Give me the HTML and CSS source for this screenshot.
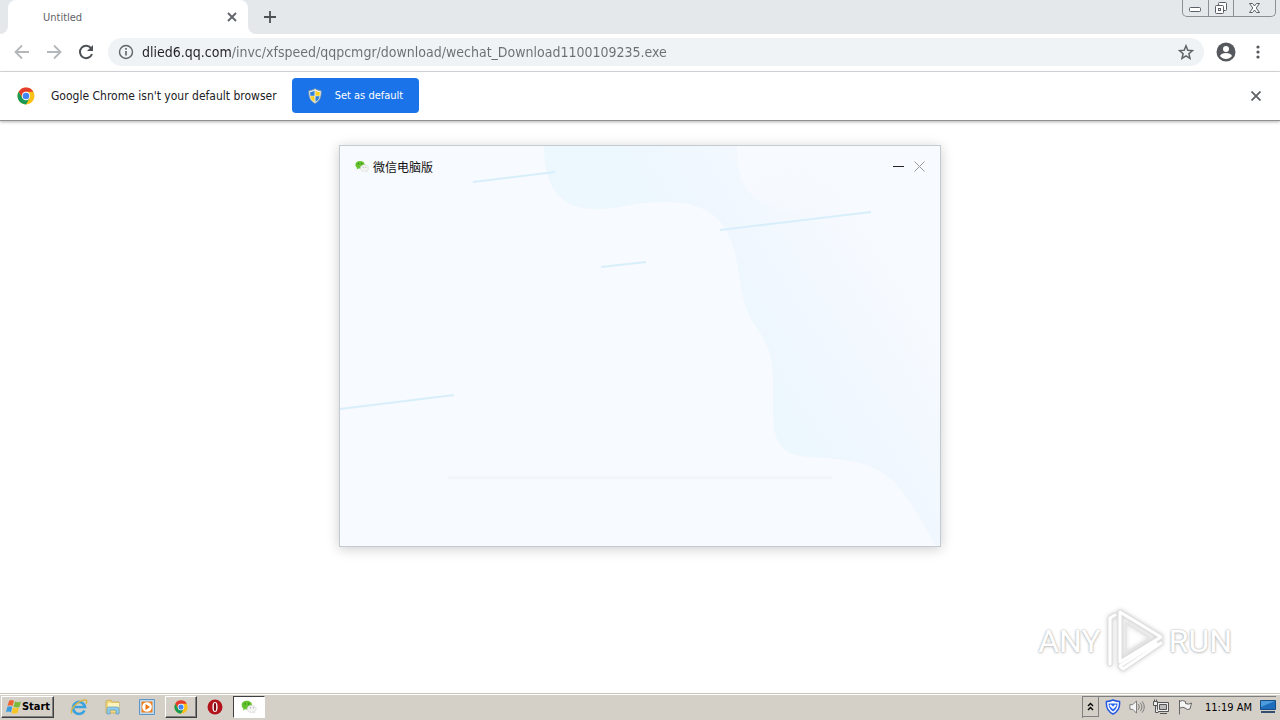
FILE: index.html
```html
<!DOCTYPE html>
<html lang="en">
<head>
<meta charset="UTF-8">
<meta name="viewport" content="width=device-width, initial-scale=1">
<title>Untitled</title>
<link rel="stylesheet" href="styles.css">
</head>
<body>

<header class="tabstrip">
  <div class="tab-edge"></div>
  <div class="tab">
    <span>Untitled</span>
    <button class="icon-btn" aria-label="Close tab">
      <svg width="10" height="10" viewBox="0 0 10 10"><path d="M1 1l8 8M9 1L1 9" stroke="#5f6368" stroke-width="1.800"/></svg>
    </button>
  </div>
  <div class="tab-rest">
    <button class="icon-btn" aria-label="New tab">
      <svg width="12" height="12" viewBox="0 0 12 12"><path d="M6 0v12M0 6h12" stroke="#4d5156" stroke-width="1.800"/></svg>
    </button>
    <div class="win-controls">
      <button aria-label="Minimize"><svg width="13" height="6" viewBox="0 0 13 6"><rect x=".5" y=".5" width="11" height="4" rx="1" fill="#fff" stroke="#5a6068"/></svg></button>
      <button aria-label="Restore"><svg width="14" height="14" viewBox="0 0 14 14" fill="#fff" stroke="#5a6068"><rect x="4.500" y="1.500" width="8" height="8" rx="1"/><rect x="1.500" y="4.500" width="8" height="8" rx="1"/><rect x="4.500" y="7.500" width="2" height="2"/></svg></button>
      <button class="wide" aria-label="Close"><svg width="13" height="12" viewBox="0 0 13 12"><path d="M1.500 1.500h3l2 2.500 2-2.500h3L8.200 6l3.300 4.500h-3l-2-2.500-2 2.500h-3L4.800 6z" fill="#fff" stroke="#5a6068"/></svg></button>
    </div>
  </div>
</header>

<nav class="toolbar">
  <button class="icon-btn" aria-label="Back"><svg width="16" height="16" viewBox="0 0 16 16" fill="none" stroke="#b4b7ba" stroke-width="1.800"><path d="M15 8H2M8 1.500L1.500 8 8 14.500"/></svg></button>
  <button class="icon-btn" aria-label="Forward"><svg width="16" height="16" viewBox="0 0 16 16" fill="none" stroke="#b4b7ba" stroke-width="1.800"><path d="M1 8h13M8 1.500L14.500 8 8 14.500"/></svg></button>
  <button class="icon-btn" aria-label="Reload"><svg width="16" height="16" viewBox="0 0 16 16"><path d="M13.300 4.500A6.200 6.200 0 1 0 14 10" fill="none" stroke="#4d5156" stroke-width="2"/><path d="M15 1v6H9z" fill="#4d5156"/></svg></button>
  <div class="omnibox">
    <svg width="16" height="16" viewBox="0 0 16 16"><circle cx="8" cy="8" r="6.500" fill="none" stroke="#5f6368" stroke-width="1.400"/><path d="M8 7v4.500M8 4v1.800" stroke="#5f6368" stroke-width="1.600"/></svg>
    <input type="text" aria-label="Address" value="dlied6.qq.com/invc/xfspeed/qqpcmgr/download/wechat_Download1100109235.exe">
    <button class="icon-btn" aria-label="Bookmark"><svg width="16" height="16" viewBox="0 0 16 16"><path d="M8 1.800l1.800 4.400 4.700.4-3.600 3.100 1.100 4.600L8 11.800l-4 2.500 1.100-4.600L1.500 6.600l4.700-.4z" fill="none" stroke="#5f6368" stroke-width="1.500"/></svg></button>
  </div>
  <button class="icon-btn profile" aria-label="Profile"><svg width="20" height="20" viewBox="0 0 20 20"><circle cx="10" cy="10" r="9.500" fill="#55585d"/><circle cx="10" cy="7" r="3" fill="#fff"/><path d="M4 14c1-4 11-4 12 0-3 4-9 4-12 0z" fill="#fff"/></svg></button>
  <button class="icon-btn" aria-label="Menu"><svg width="4" height="14" viewBox="0 0 4 14" fill="#55585d"><circle cx="2" cy="2" r="1.600"/><circle cx="2" cy="7" r="1.600"/><circle cx="2" cy="12" r="1.600"/></svg></button>
</nav>

<section class="infobar">
  <svg width="18" height="18" viewBox="0 0 18 18"><use href="#chrome"/></svg>
  <p>Google Chrome isn't your default browser</p>
  <button class="set-default">
    <svg width="14" height="16" viewBox="0 0 14 16"><path d="M7 .5C5 2 3 2.500.800 2.500.500 9 2 13 7 15.500 12 13 13.500 9 13.200 2.500 11 2.500 9 2 7 .5z" fill="#e8edf2" stroke="#6e88a0" stroke-width=".8"/><path d="M6.500 2.500C5 3.500 3.500 4 2.200 4l.1 3.700h4.200z" fill="#2f80d8"/><path d="M7.500 2.500C9 3.500 10.500 4 11.800 4l-.1 3.700H7.500z" fill="#fbd21f"/><path d="M2.400 8.300h4.100v5.500C4 12.500 2.800 10.800 2.400 8.300z" fill="#fbd21f"/><path d="M11.600 8.300H7.500v5.500c2.500-1.300 3.700-3 4.100-5.500z" fill="#2f80d8"/></svg>
    Set as default
  </button>
  <button class="icon-btn" aria-label="Dismiss"><svg width="10" height="10" viewBox="0 0 10 10"><path d="M.500.500l9 9M9.500.500l-9 9" stroke="#5f6368" stroke-width="1.800"/></svg></button>
</section>

<main>
  <section class="installer">
    <svg class="art" viewBox="0 0 600 400" preserveAspectRatio="none">
      <defs>
        <linearGradient id="wave" gradientUnits="userSpaceOnUse" x1="410" y1="210" x2="550" y2="120">
          <stop offset="0" stop-color="#edf7fe"/>
          <stop offset=".6" stop-color="#f2f8fe"/>
          <stop offset="1" stop-color="#f7faff"/>
        </linearGradient>
        <linearGradient id="fade" gradientUnits="userSpaceOnUse" x1="450" y1="10" x2="490" y2="85">
          <stop offset="0" stop-color="#f7faff"/>
          <stop offset="1" stop-color="#f7faff" stop-opacity="0"/>
        </linearGradient>
      </defs>
      <path d="M204 0C204 38 218 63 255 63C285 63 290 56 325 56C382 56 393 86 400 135C407 190 431 180 433 230C435 275 424 309 470 311C550 315 555 329 596 400H600V0z" fill="url(#wave)"/>
      <path d="M397 0H600V175C560 120 525 85 450 66C410 58 397 40 397 0z" fill="url(#fade)"/>
      <path d="M133 36l82-10M380 84l151-18M261 121l45-5M0 263l114-14" stroke="#d8effb" stroke-width="2"/>
    </svg>
    <div class="installer-title">
      <svg width="14" height="12" viewBox="0 0 18 15"><use href="#wechat"/></svg>
      <h1>微信电脑版</h1>
      <button class="icon-btn" aria-label="Minimize"><svg width="11" height="11" viewBox="0 0 11 11"><path d="M0 5.500h11" stroke="#222" stroke-width="1"/></svg></button>
      <button class="icon-btn" aria-label="Close"><svg width="11" height="11" viewBox="0 0 11 11"><path d="M.500.500l10 10M10.500.500l-10 10" stroke="#999"/></svg></button>
    </div>
    <div class="progress"></div>
  </section>

  <div class="watermark">
    <span>ANY</span>
    <svg width="58" height="64" viewBox="0 0 58 64" fill="none" stroke-linejoin="round" stroke-linecap="round">
      <g stroke="#dedede" stroke-width="5"><path d="M14 3L55 28 14 53zM4 55V9l5-3M55 34L17 60l-3-3 36-23"/></g>
      <g stroke="#fff" stroke-width="3"><path d="M14 3L55 28 14 53zM4 55V9l5-3M55 34L17 60l-3-3 36-23"/></g>
      <path d="M20 14v30l24-15z" stroke="#e4e4e4" stroke-width="1.500"/>
    </svg>
    <span>RUN</span>
  </div>
</main>

<footer class="taskbar">
  <button class="task raised start">
    <svg width="17" height="16" viewBox="0 0 17 16"><path d="M4 2q3-2 5 0L7.500 7q-2-1.500-5 0z" fill="#ee6332"/><path d="M10 2.500q3 1.500 6 0L14.500 8q-3 1-6-.5z" fill="#7cba3d"/><path d="M2.200 8q3-1.500 5 0L6 13.500q-3-2-5 0z" fill="#3a9de0"/><path d="M8 8.500q3 1.500 6 0L12.500 14q-3 1.500-6 0z" fill="#fbc527"/></svg>
    Start
  </button>
  <button class="task" aria-label="Internet Explorer"><svg width="18" height="18" viewBox="0 0 18 18" fill="none"><path d="M14.500 12.500A6 6 0 1 1 15 9H4" stroke="#3aa3df" stroke-width="2.600"/><path d="M2 15.500C-1 12 8 2 15.500 2 17.500 2 17 4 16 6" stroke="#d9b544" stroke-width="1.300"/></svg></button>
  <button class="task" aria-label="Explorer"><svg width="18" height="18" viewBox="0 0 18 18"><path d="M2 3l5-1 1 2h7v11H2z" fill="#f2d77c" stroke="#c9a94f" stroke-width=".8"/><path d="M4 5h11v5H4z" fill="#fff3bd"/><path d="M3 16V11q0-2 2-2h8q2 0 2 2v5h-3v-4H6v4z" fill="#8fcbea" stroke="#5b9cc2" stroke-width=".7"/></svg></button>
  <button class="task" aria-label="Media Player"><svg width="18" height="18" viewBox="0 0 18 18"><path d="M1.500 1.500h15v15h-15z" fill="#bddcf3" stroke="#5c96c8"/><path d="M3.500 3.500h11v11h-11z" fill="#f2811d"/><circle cx="9" cy="9" r="4.800" fill="#fff"/><path d="M7.500 6v6L12 9z" fill="#ee7410"/></svg></button>
  <button class="task raised" aria-label="Chrome"><svg width="14" height="14" viewBox="0 0 18 18"><use href="#chrome"/></svg></button>
  <button class="task" aria-label="Opera"><svg width="16" height="16" viewBox="0 0 16 16"><circle cx="8" cy="8" r="7.500" fill="#b3141c"/><ellipse cx="8" cy="8" rx="2.600" ry="5" fill="#fff"/><ellipse cx="8" cy="8" rx="1.200" ry="4.200" fill="#7c0c12"/></svg></button>
  <button class="task pressed" aria-label="WeChat"><svg width="16" height="13" viewBox="0 0 18 15"><use href="#wechat"/></svg></button>
  <div class="tray">
    <button class="task chevron" aria-label="Show hidden icons"><svg width="7" height="9" viewBox="0 0 7 9" fill="none" stroke="#000" stroke-width="1.400"><path d="M1 4l2.500-2.500L6 4M1 8l2.500-2.500L6 8"/></svg></button>
    <svg width="16" height="16" viewBox="0 0 16 16"><path d="M8 1q3.500 1.500 6.500 1.500 1 9-6.500 12.500Q.500 11.500 1.500 2.500 4.500 2.500 8 1z" fill="#fff" stroke="#2458dc" stroke-width="1.500"/><path d="M3.500 4.500h9q0 5-4.500 8-4.500-3-4.500-8z" fill="#2a66ee"/><path d="M5 6l3 3 3-3" fill="none" stroke="#fff" stroke-width="1.800"/></svg>
    <svg width="16" height="16" viewBox="0 0 17 16" fill="none" stroke="#777"><path d="M1 5.500h3l4-4v13l-4-4H1z" fill="#f5f5f5"/><path d="M10 5q2 3 0 6M12 3.500q3.500 4.500 0 9M14 2q4.500 6 0 12"/></svg>
    <svg width="16" height="16" viewBox="0 0 16 16" fill="#eee" stroke="#555"><path d="M4.500 3.500h11v9h-11z"/><path d="M6.500 5.500h7v5h-7z" fill="#bbb"/><path d="M7 14.500h7M.500 2.500h4v4h-4zM1.500.500v2M3.500.500v2M2.500 6.500v7h3"/></svg>
    <svg width="16" height="16" viewBox="0 0 16 16" fill="#f5f5f5" stroke="#666"><path d="M2.500 2.500q3-2 6 0v2q3 1.500 6-.5l-1.500 6q-3 1.500-5-1-2-1.500-5 0M2.500 1v14.500"/></svg>
    <time>11:19 AM</time>
    <svg width="16" height="14" viewBox="0 0 16 14"><path d="M.500.500h15v9H.500z" fill="#1f6dba" stroke="#174d87"/><path d="M1 1h14L1 7z" fill="#4c9cdd"/><path d="M1 11h14v2H1z" fill="#344e6e"/></svg>
  </div>
</footer>

<!-- shared icons -->
<svg class="sprite" width="0" height="0">
  <symbol id="chrome" viewBox="0 0 18 18">
    <circle cx="9" cy="9" r="8.500" fill="#fbc116"/>
    <path d="M1.640 4.750A8.500 8.500 0 0 1 16.400 4.750H9A4.250 4.250 0 0 0 5.300 11z" fill="#e33b2e"/>
    <path d="M1.640 4.750A8.500 8.500 0 0 0 9 17.500L12.700 11.100A4.250 4.250 0 0 1 5.300 11.100z" fill="#169a55"/>
    <circle cx="9" cy="9" r="4.200" fill="#fff"/>
    <circle cx="9" cy="9" r="3.300" fill="#4285f4"/>
  </symbol>
  <symbol id="wechat" viewBox="0 0 18 15">
    <path d="M6.500 1C3 1 .5 3 .5 6c0 1.600.8 3 2.200 3.900L2 12l2.500-1.300C10 11.500 12.500 9 12.500 6c0-3-2.500-5-6-5z" fill="#63c22d"/>
    <path d="M12 6c-3 0-5.200 1.800-5.200 4.200s2.200 4.200 5.200 4.200l2-.3 1.800.9-.5-1.700c1.200-.8 2-1.900 2-3.100C17.300 7.800 15 6 12 6z" fill="#f4f4f4" stroke="#c9cdc9" stroke-width=".6"/>
    <circle cx="4.500" cy="4.500" r=".8" fill="#267810"/><circle cx="8.500" cy="4.500" r=".8" fill="#267810"/>
    <circle cx="10.500" cy="9" r=".6" fill="#777"/><circle cx="14" cy="9" r=".6" fill="#777"/>
  </symbol>
</svg>

</body>
</html>
```
FILE: styles.css
```css
* {
  box-sizing: border-box;
}
body {
  margin: 0;
  min-height: 100vh;
  display: flex;
  flex-direction: column;
  background: #fff;
  color: #202124;
  font-family: "DejaVu Sans Condensed", "DejaVu Sans", "Noto Sans CJK SC", sans-serif;
  font-size: 12px;
}
button {
  font: inherit;
  color: inherit;
  padding: 0;
  border: none;
  background: none;
}
svg {
  display: block;
  flex: none;
}
.sprite {
  position: absolute;
}
.icon-btn {
  display: flex;
  align-items: center;
  justify-content: center;
}

/* tabs */
.tabstrip {
  display: flex;
  height: 34px;
  background: #fff;
}
.tab-edge {
  width: 8px;
  background: #e4e8eb;
  border-bottom-right-radius: 8px;
}
.tab {
  width: 240px;
  padding: 0 11px 0 35px;
  display: flex;
  align-items: center;
  justify-content: space-between;
  background: linear-gradient(#e4e8eb, #e4e8eb) top / 100% 8px no-repeat;
  position: relative;
  font-size: 11px;
  color: #5f6368;
}
.tab::before {
  content: "";
  position: absolute;
  inset: 0;
  background: #fff;
  border-radius: 8px 8px 0 0;
}
.tab > * {
  position: relative;
}
.tab-rest {
  flex: 1;
  display: flex;
  align-items: flex-start;
  justify-content: space-between;
  padding: 0 4px 0 16px;
  background: #e4e8eb;
  border-bottom-left-radius: 8px;
}
.tab-rest > .icon-btn {
  height: 34px;
}
.win-controls {
  display: flex;
  border: 1px solid #8a9096;
  border-top: none;
  border-radius: 0 0 5px 5px;
}
.win-controls button {
  width: 25px;
  height: 16px;
  display: flex;
  align-items: center;
  justify-content: center;
}
.win-controls button:first-child svg {
  margin-top: 4px;
}
.win-controls button + button {
  border-left: 1px solid #8a9096;
}
.win-controls .wide {
  width: 42px;
}

/* address row */
.toolbar {
  display: flex;
  align-items: center;
  gap: 16px;
  height: 38px;
  padding: 0 20px 2px 14px;
  border-bottom: 1px solid #dadce0;
}
.omnibox {
  flex: 1;
  height: 28px;
  margin: 0 -4px 0 -2px;
  padding: 0 10px;
  display: flex;
  align-items: center;
  gap: 8px;
  background: #eff3f5;
  border-radius: 14px;
}
.profile {
  margin-right: 4px;
}
.omnibox input {
  flex: 1;
  min-width: 0;
  padding: 0;
  border: none;
  outline: none;
  font: inherit;
  font-size: 14px;
  line-height: 20px;
  /* host dark, path grey */
  color: transparent;
  background: linear-gradient(90deg, #202124 89px, #6a6e73 89px);
  -webkit-background-clip: text;
  background-clip: text;
}

/* default browser bar */
.infobar {
  display: flex;
  align-items: center;
  height: 49px;
  padding: 0 19px 1px 17px;
  border-bottom: 1px solid #8f9294;
  box-shadow: 0 1px 3px rgba(0, 0, 0, 0.3);
}
.infobar p {
  margin: 0 15px 0 16px;
  font-size: 12px;
}
.set-default {
  display: flex;
  align-items: center;
  gap: 13px;
  height: 35px;
  padding: 0 16px;
  border-radius: 4px;
  background: #1a73e8;
  color: #fff;
  font-size: 11px;
}
.infobar > .icon-btn {
  margin-left: auto;
}

main {
  flex: 1;
  position: relative;
  padding: 24px 16px;
}

/* installer window */
.installer {
  position: relative;
  width: 100%;
  max-width: 602px;
  min-height: 402px;
  margin: 0 auto;
  display: flex;
  flex-direction: column;
  justify-content: space-between;
  align-items: center;
  border: 1px solid #c3cad0;
  background: #f7faff;
  box-shadow: 0 2px 12px rgba(0, 0, 0, 0.2);
}
.art {
  position: absolute;
  inset: 0;
  width: 100%;
  height: 100%;
}
.installer-title {
  position: relative;
  align-self: stretch;
  display: flex;
  align-items: center;
  gap: 10px;
  height: 40px;
  padding: 0 15px;
}
.installer-title h1 {
  flex: 1;
  margin: 0 0 0 -6px;
  font-family: "Noto Sans CJK SC", sans-serif;
  font-size: 12px;
  font-weight: normal;
  color: #111;
}
.progress {
  position: relative;
  width: 64%;
  height: 3px;
  margin-bottom: 67px;
  background: #f2f6fa;
}

.watermark {
  position: absolute;
  right: 48px;
  bottom: 20px;
  display: flex;
  align-items: center;
  gap: 5px;
  font-family: Roboto, "Liberation Sans", sans-serif;
  font-size: 32px;
  color: #fff;
  text-shadow: 0 0 2px #aaa, 0 1px 3px #ccc;
}
.watermark svg {
  filter: drop-shadow(0 0 2px #ccc);
}

/* taskbar */
.taskbar {
  display: flex;
  align-items: center;
  gap: 2px;
  height: 27px;
  padding: 1px 4px 2px 1px;
  border-top: 1px solid #c8c4bc;
  box-shadow: inset 0 1px #fff;
  background: #d4d0c8;
  font-size: 11px;
  color: #000;
}
.task {
  width: 32px;
  height: 22px;
  display: flex;
  align-items: center;
  justify-content: center;
}
.raised {
  border: 1px solid;
  border-color: #fff #404040 #404040 #fff;
  box-shadow: inset -1px -1px #808080;
}
.pressed {
  border: 1px solid;
  border-color: #404040 #fff #fff #404040;
  background: #fff;
}
.start {
  width: 53px;
  margin-right: 7px;
  font-weight: bold;
}
.tray {
  display: flex;
  align-items: center;
  gap: 8px;
  height: 22px;
  margin-left: auto;
  border-top: 1px solid #808080;
  border-left: 1px solid #808080;
}
.tray time {
  margin-left: 4px;
}
.chevron {
  width: 16px;
  height: 20px;
  margin-right: -2px;
  border-right: 1px solid #808080;
  border-bottom: 1px solid #808080;
}
```
